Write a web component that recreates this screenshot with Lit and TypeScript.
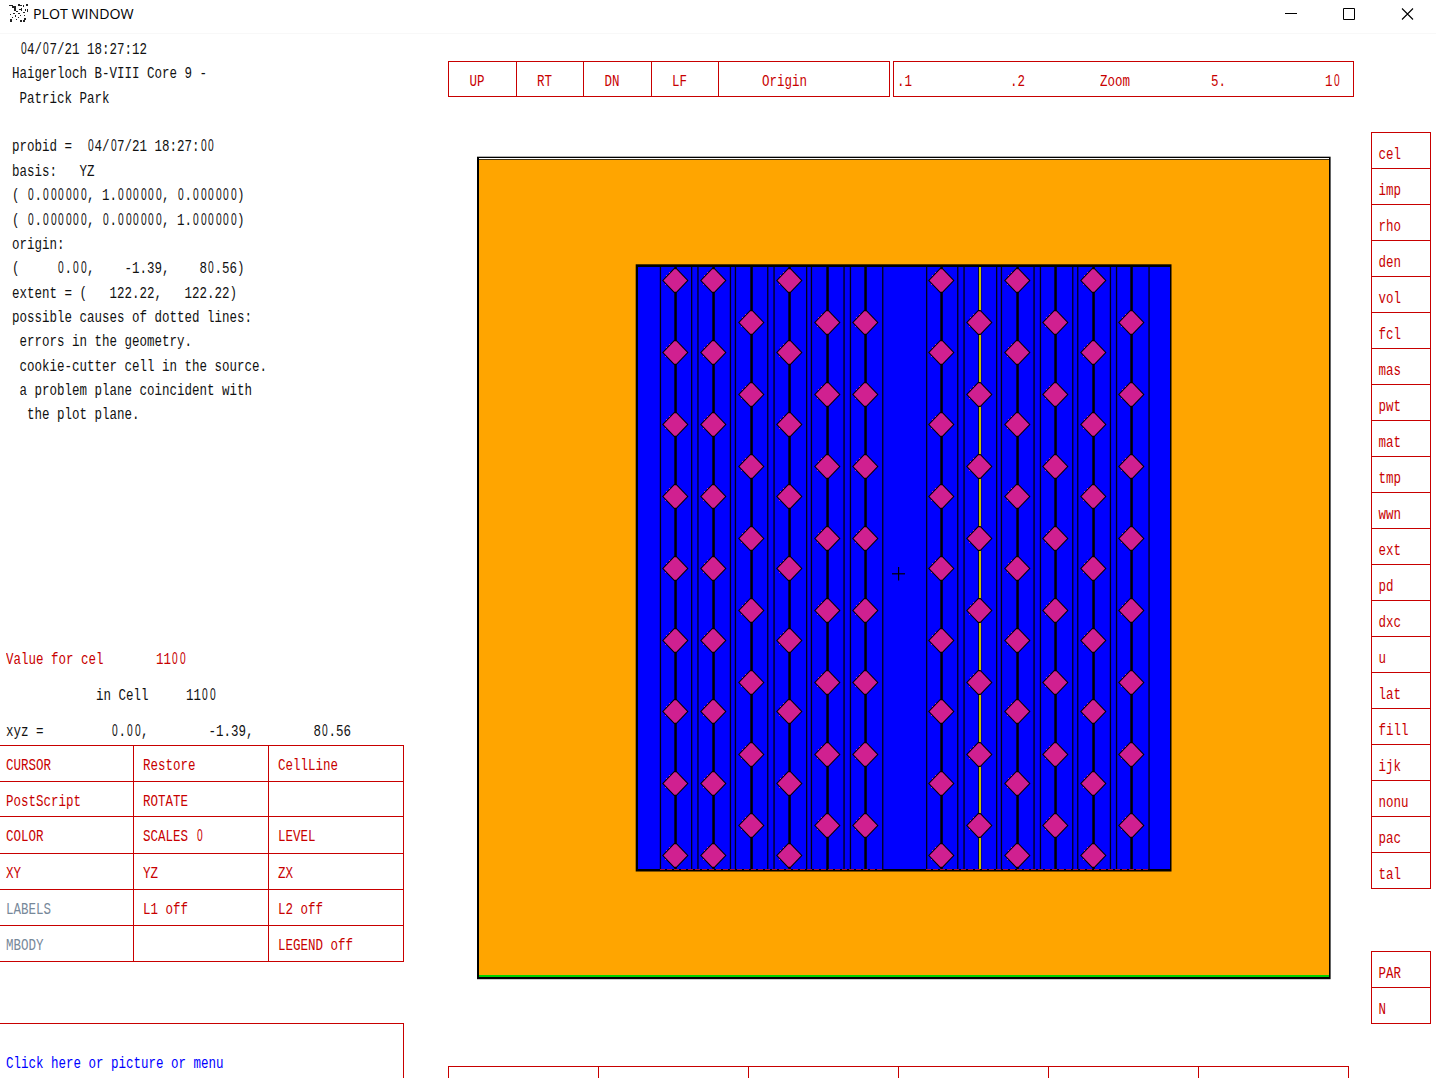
import { LitElement, html, svg, css } from "lit";
import { customElement, property } from "lit/decorators.js";

const LEGEND = [
  " 04/07/21 18:27:12",
  "Haigerloch B-VIII Core 9 -",
  " Patrick Park",
  "",
  "probid =  04/07/21 18:27:00",
  "basis:   YZ",
  "( 0.000000, 1.000000, 0.000000)",
  "( 0.000000, 0.000000, 1.000000)",
  "origin:",
  "(     0.00,    -1.39,    80.56)",
  "extent = (   122.22,   122.22)",
  "possible causes of dotted lines:",
  " errors in the geometry.",
  " cookie-cutter cell in the source.",
  " a problem plane coincident with",
  "  the plot plane.",
];

const COMMANDS = [
  "CURSOR", "Restore", "CellLine",
  "PostScript", "ROTATE", "",
  "COLOR", "SCALES 0", "LEVEL",
  "XY", "YZ", "ZX",
  "LABELS", "L1 off", "L2 off",
  "MBODY", "", "LEGEND off",
];
const DISABLED = new Set(["LABELS", "MBODY"]);

const EDITS = [
  "cel", "imp", "rho", "den", "vol", "fcl", "mas", "pwt", "mat", "tmp", "wwn",
  "ext", "pd", "dxc", "u", "lat", "fill", "ijk", "nonu", "pac", "tal",
];

// Terminal-style label: narrow fixed pitch, tall glyphs, plain zero.
@customElement("term-text")
class TermText extends LitElement {
  @property() text = "";
  static styles = css`
    :host { display: block; white-space: pre; font: 12.5px/13px "Liberation Mono", monospace; height: 13px; }
    .line { display: block; transform: scaleY(1.27); transform-origin: 50% 50%; }
    .zero { display: inline-block; width: 7.5px; text-align: center; transform: scaleX(0.8);
      font-family: "Liberation Sans", sans-serif; font-size: 12.8px; line-height: 0; }
  `;
  render() {
    const parts = this.text.split(/(0)/);
    return html`<span class="line">${parts.map((p) => (p === "0" ? html`<span class="zero">0</span>` : p))}</span>`;
  }
}

const THIN = [
  660, 691.2, 697.5, 730, 735, 767.3, 773.6, 806.2, 811, 843.6, 850, 882.3,
  926.2, 957.3, 963.6, 996.2, 1001, 1033.6, 1040, 1072.3, 1077.3, 1110, 1116.1, 1148.6,
];
// Chain x position and whether it starts on the upper level.
const CHAINS: [number, boolean][] = [
  [675, true], [713, true], [751, false], [789, true], [827, false], [865, false],
  [941, true], [979, false], [1017, true], [1055, false], [1093, true], [1131, false],
];

@customElement("core-plot")
class CorePlot extends LitElement {
  static styles = css`
    :host { display: block; }
    svg { display: block; shape-rendering: crispEdges; }
    .soft { shape-rendering: geometricPrecision; }
  `;
  private chain(x: number, upper: boolean) {
    const start = upper ? 280.2 : 322.3;
    const n = upper ? 9 : 8;
    const ys = Array.from({ length: n }, (_, k) => Math.round(start + 71.87 * k));
    const selected = x === 979;
    return svg`
      <rect class="soft" x=${x - 0.7} y="266" width=${selected ? 3 : 2.5} height="604" fill="#000" />
      ${selected ? svg`<rect class="soft" x="979" y="267" width="2" height="602" fill="#c8c000" />` : ""}
      ${ys.map(
        (y) => svg`
          <path class="soft" d="M${x - 12.9} ${y + 0.5}l12-12.4h2.4l12 12.4-12 12.4h-2.4z" fill="#000" />
          <path class="soft" d="M${x - 11.5} ${y + 0.5}l10.8-11.2h2l10.8 11.2-10.8 11.2h-2z" fill="#d02090" />
          <path d="M${x - 9} ${y - 5}h1v1h-1zM${x - 6} ${y - 8}h1v1h-1zM${x - 10} ${y + 4}h1v1h-1z" fill="#d02090" />`
      )}`;
  }
  render() {
    return html`<svg width="856" height="825" viewBox="476 155 856 825">
      <rect class="soft" x="477" y="156.7" width="853.6" height="822.5" fill="#000" />
      <rect x="479" y="158" width="850" height="1" fill="#fff" />
      <rect x="479" y="160" width="850" height="816" fill="#ffa500" />
      <rect x="479" y="159" width="850" height="1" fill="#403010" />
      <rect x="479" y="975" width="850" height="2" fill="#00d200" />
      <rect class="soft" x="635.7" y="264.3" width="535.8" height="607.2" fill="#000" />
      <rect x="638" y="267" width="532" height="602" fill="#00f" />
      ${THIN.map((x) => svg`<rect class="soft" x=${x - 0.2} y="267" width="1.3" height="603" fill="#000018" />`)}
      ${CHAINS.map(([x, up]) => this.chain(x, up))}
      <path d="M660 869.8H883M926 869.8H1149" stroke="#a01030" stroke-dasharray="5 2" />
      <rect class="soft" x="892" y="573.2" width="13" height="1.2" fill="#000" />
      <rect class="soft" x="898" y="567" width="1.2" height="13.5" fill="#000" />
    </svg>`;
  }
}

@customElement("app-root")
class AppRoot extends LitElement {
  static styles = css`
    :host { display: block; width: 1436px; height: 1078px; overflow: hidden; background: #fff; color: #111; }
    * { box-sizing: border-box; }
    .title { height: 34px; display: flex; align-items: flex-start; border-bottom: 1px solid #f8f8f8; padding-left: 9px; }
    .title .logo { margin-top: 4px; }
    .title .name { margin-left: 4px; width: 1242px; font: 14.2px/27px "Open Sans", sans-serif; color: #000; white-space: nowrap; }
    .title .controls { display: flex; gap: 46px; margin-top: 8px; margin-left: 10px; }
    .body { display: grid; grid-template-columns: 448px 922.5px 65.5px; height: 1044px; }
    .red { color: #c80000; }
    .left { display: flex; flex-direction: column; height: 1044px; }
    .left > * { flex-shrink: 0; }
    .legend { padding: 10px 0 0 12px; height: 620px; }
    .legend .row { height: 24.37px; }
    .value { padding-left: 6px; height: 91px; }
    .value .row { height: 36px; }
    .commands { display: grid; grid-template-columns: 134px 135px 135px; grid-template-rows: 36px 35px 37px 36px 36px 36px;
      width: 404px; border-bottom: 1px solid #c80000; }
    .commands .cell { border-top: 1px solid #c80000; border-right: 1px solid #c80000; padding: 14px 0 0 9px; }
    .commands .cell:nth-child(3n + 1) { padding-left: 6px; }
    .disabled { color: #778899; }
    .prompt { margin-top: 61px; width: 404px; height: 55px; border: solid #c80000; border-width: 1px 1px 0 0; padding: 34px 0 0 6px; color: #00f; }
    .center { display: flex; flex-direction: column; }
    .bar { display: flex; margin-top: 27px; height: 36px; }
    .bar .cell { border: 1px solid #c80000; border-right: 0; padding: 14px 0 0 20.5px; width: 67.5px; }
    .bar .origin { width: 172px; border-right: 1px solid #c80000; padding-left: 43px; }
    .zoom { margin-left: 3px; width: 461px; border: 1px solid #c80000; padding-top: 14px; display: grid;
      grid-template-columns: 113px 90px 111px 114px auto; padding-left: 3px; }
    core-plot { margin: 58px 0 0 28px; }
    .scale { margin-top: 86px; display: grid; grid-template-columns: repeat(6, 150px); width: 901px; height: 12px;
      border-top: 1px solid #c80000; border-right: 1px solid #c80000; }
    .scale div { border-left: 1px solid #c80000; }
    .right { padding-top: 98px; }
    .stack { width: 60px; border: 1px solid #c80000; border-top: 0; }
    .stack .cell { height: 36px; border-top: 1px solid #c80000; padding: 16px 0 0 7px; }
    .stack + .stack { margin-top: 62px; }
  `;
  render() {
    return html`
      <div class="title">
        <svg class="logo" width="20" height="20" viewBox="0 0 20 20" fill="#222" shape-rendering="crispEdges">
          <path d="M0 1h4v1h-4zM3 2h4v2h-4zM5 4h2v3h-2zM9 0h2v2h-2zM11 1h2v1h-2zM14 1h1v2h-1zM17 0h2v2h-2zM16 5h1v2h-1zM10 5h2v1h-2zM12 4h1v3h-1zM18 5h1v3h-1zM7 7h2v1h-2zM9 9h2v1h-2zM4 9h2v1h-2zM1 10h1v1h-1zM14 8h2v1h-2zM6 11h1v2h-1zM11 11h1v1h-1zM15 11h1v1h-1zM3 13h1v1h-1zM1 15h2v3h-2zM7 15h1v1h-1zM11 16h2v2h-2zM15 14h2v2h-2zM14 16h2v2h-2zM9 13h1v1h-1z" />
        </svg>
        <div class="name">PLOT WINDOW</div>
        <div class="controls">
          <svg width="12" height="12" stroke="#000"><path d="M0 5.5h12" /></svg>
          <svg width="12" height="12" stroke="#000" fill="none"><path d="M.5.5h11v11h-11z" /></svg>
          <svg width="13" height="13" stroke="#000" stroke-width="1.1"><path d="M1 .5l11 11M12 .5l-11 11" /></svg>
        </div>
      </div>
      <div class="body">
        <div class="left">
          <div class="legend">${LEGEND.map((t) => html`<div class="row"><term-text .text=${t}></term-text></div>`)}</div>
          <div class="value">
            <div class="row"><term-text class="red" .text=${"Value for cel       1100"}></term-text></div>
            <div class="row"><term-text .text=${"            in Cell     1100"}></term-text></div>
            <div class="row"><term-text .text=${"xyz =         0.00,        -1.39,        80.56"}></term-text></div>
          </div>
          <div class="commands red">
            ${COMMANDS.map((c) => html`<div class="cell"><term-text class=${DISABLED.has(c) ? "disabled" : "red"} .text=${c}></term-text></div>`)}
          </div>
          <div class="prompt"><term-text .text=${"Click here or picture or menu"}></term-text></div>
        </div>
        <div class="center red">
          <div class="bar">
            ${["UP", "RT", "DN", "LF"].map((c) => html`<div class="cell"><term-text .text=${c}></term-text></div>`)}
            <div class="cell origin"><term-text .text=${"Origin"}></term-text></div>
            <div class="zoom">${[".1", ".2", "Zoom", "5.", "10"].map((c) => html`<term-text .text=${c}></term-text>`)}</div>
          </div>
          <core-plot></core-plot>
          <div class="scale">${[0, 1, 2, 3, 4, 5].map(() => html`<div></div>`)}</div>
        </div>
        <div class="right red">
          <div class="stack">${EDITS.map((c) => html`<div class="cell"><term-text .text=${c}></term-text></div>`)}</div>
          <div class="stack">${["PAR", "N"].map((c) => html`<div class="cell"><term-text .text=${c}></term-text></div>`)}</div>
        </div>
      </div>
    `;
  }
}
